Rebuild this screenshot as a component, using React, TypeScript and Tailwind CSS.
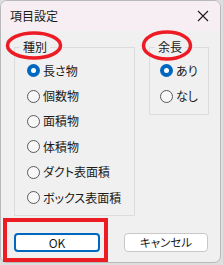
import React from 'react';

const font = { fontFamily: '"Noto Sans CJK JP", "Noto Sans", sans-serif' };

function Radio({ label, checked }: { label: string; checked?: boolean }) {
  return (
    <div className="flex items-center h-[25.4px] gap-[3px]">
      {checked ? (
        <span className="w-[13px] h-[13px] rounded-full bg-[#0067c0] flex items-center justify-center">
          <span className="w-[5px] h-[5px] rounded-full bg-white" />
        </span>
      ) : (
        <span className="w-[13px] h-[13px] rounded-full border border-[#5a5a5a] bg-[#f7f7f7]" />
      )}
      <span className="text-[12px] leading-none text-[#1a1a1a]">{label}</span>
    </div>
  );
}

function Group({
  title,
  className,
  bodyClass,
  children,
}: {
  title: string;
  className: string;
  bodyClass: string;
  children: React.ReactNode;
}) {
  return (
    <fieldset className={`border border-[#dcdcdc] ${className}`}>
      <legend className="ml-[5px] px-[3px] text-[12px] leading-[16px] text-[#1a1a1a]">{title}</legend>
      <div className={bodyClass}>{children}</div>
    </fieldset>
  );
}

export default function App() {
  return (
    <div
      className="w-[223px] h-[265px] bg-[#dedede] relative overflow-hidden [font-feature-settings:'palt']"
      style={font}
    >
      <div className="w-[221px] h-[263px] rounded-[7px] border border-[#b9b9b9] bg-[#f0f0f0] overflow-hidden flex flex-col">
        <div className="h-[30px] bg-[#f6eef2] flex items-center justify-between pl-[9px] pr-[9px]">
          <span className="text-[12px] text-[#1a1a1a]">項目設定</span>
          <svg width="12" height="12" viewBox="0 0 12 12" className="mr-[2px]">
            <path d="M1 1 L11 11 M11 1 L1 11" stroke="#1a1a1a" strokeWidth="1.1" />
          </svg>
        </div>
        <div className="flex items-start pt-[8px] pl-[13px] gap-[14px]">
          <Group title="種別" className="w-[121px] h-[177px]" bodyClass="pl-[12px] pt-[3px]">
            <Radio label="長さ物" checked />
            <Radio label="個数物" />
            <Radio label="面積物" />
            <Radio label="体積物" />
            <Radio label="ダクト表面積" />
            <Radio label="ボックス表面積" />
          </Group>
          <Group title="余長" className="w-[60px] h-[76px]" bodyClass="pl-[10px] pt-[3px]">
            <Radio label="あり" checked />
            <Radio label="なし" />
          </Group>
        </div>
        <div className="flex pl-[13px] gap-[24px] mt-[17px]">
          <button className="w-[86px] h-[19px] rounded-[4px] border-2 border-[#0067c0] bg-white text-[12px] leading-none text-[#1a1a1a]">
            OK
          </button>
          <button className="w-[84px] h-[19px] rounded-[4px] border border-[#c8c8c8] bg-white text-[11.5px] leading-none text-[#1a1a1a]">
            キャンセル
          </button>
        </div>
      </div>
      {/* red annotations */}
      <div className="absolute left-[3px] top-[218px] w-[105px] h-[44px] border-[4px] border-[#ed1c24]" />
      <svg className="absolute left-0 top-0" width="223" height="265" viewBox="0 0 223 265">
        <ellipse cx="34" cy="45.5" rx="26.5" ry="12.5" fill="none" stroke="#ed1c24" strokeWidth="3.5" />
        <ellipse cx="167" cy="45.5" rx="23.5" ry="13.5" fill="none" stroke="#ed1c24" strokeWidth="3.5" />
      </svg>
    </div>
  );
}
